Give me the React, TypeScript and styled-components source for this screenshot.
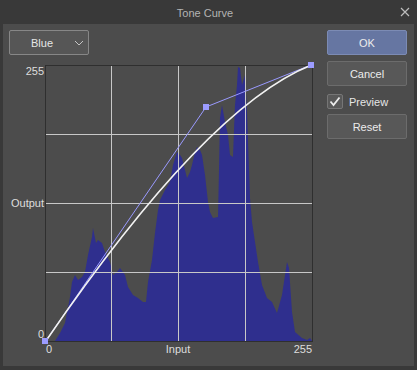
import React from "react";
import styled, { createGlobalStyle } from "styled-components";

const GlobalStyle = createGlobalStyle`
  html, body { margin: 0; padding: 0; background: #393939; }
  body { font-family: "Liberation Sans", Arial, sans-serif; }
  * { box-sizing: border-box; }
`;

const Window = styled.div`
  width: 417px;
  height: 370px;
  background: #393939;
  display: flex;
  flex-direction: column;
  font-family: "Liberation Sans", Arial, sans-serif;
  font-size: 11px;
`;

const TitleBar = styled.div`
  height: 24px;
  display: grid;
  grid-template-columns: 1fr auto 1fr;
  align-items: center;
  padding: 0 7px 0 0;
`;

const Title = styled.div`
  grid-column: 2;
  color: #b4b4b4;
  font-size: 11px;
  line-height: 14px;
  padding-top: 1px;
`;

const CloseButton = styled.div`
  grid-column: 3;
  justify-self: end;
  width: 10px;
  height: 10px;
  display: flex;
`;

const Panel = styled.div`
  margin: 0 3px 4px 3px;
  flex: 1;
  background: #4c4c4c;
  display: flex;
  padding: 6px 7px 0 6px;
  gap: 14px;
`;

const LeftCol = styled.div`
  width: 304px;
  display: flex;
  flex-direction: column;
`;

const RightCol = styled.div`
  width: 80px;
  display: flex;
  flex-direction: column;
`;

const Dropdown = styled.div`
  width: 80px;
  height: 25px;
  border: 1px solid #878787;
  border-radius: 2px;
  background: #565656;
  color: #e6e6e6;
  display: flex;
  align-items: center;
  padding: 0 4px 0 21px;
  justify-content: space-between;
  font-size: 11px;
`;

const ChartArea = styled.div`
  margin-top: 10px;
  display: grid;
  grid-template-columns: 36px 268px;
  grid-template-rows: 277px auto;
`;

const YLabels = styled.div`
  display: flex;
  flex-direction: column;
  justify-content: space-between;
  align-items: flex-end;
  padding: 1px 1px 2px 0;
  color: #dedede;
  line-height: 11px;
`;

const Plot = styled.svg`
  display: block;
  overflow: visible;
`;

const XLabels = styled.div`
  grid-column: 2;
  display: grid;
  grid-template-columns: 1fr auto 1fr;
  padding: 2px 1px 0 1px;
  color: #dedede;
  line-height: 11px;
`;

const XLabel = styled.span<{ $align: "start" | "center" | "end" }>`
  justify-self: ${(p) => p.$align};
  margin-right: ${(p) => (p.$align === "center" ? "2px" : "0")};
`;

const Button = styled.div<{ $primary?: boolean; $gap?: number }>`
  height: 25px;
  margin-top: ${(p) => p.$gap ?? 0}px;
  border: 1px solid ${(p) => (p.$primary ? "#7c8bb4" : "#6c6c6c")};
  border-radius: 2px;
  background: ${(p) => (p.$primary ? "#6676a2" : "#585858")};
  color: #ececec;
  display: flex;
  align-items: center;
  justify-content: center;
  font-size: 11px;
`;

const CheckRow = styled.label`
  margin-top: 8px;
  height: 15px;
  display: flex;
  align-items: center;
  gap: 6px;
  color: #e6e6e6;
  font-size: 11px;
`;

const CheckBox = styled.span`
  width: 16px;
  height: 15px;
  border: 1px solid #767676;
  border-radius: 2px;
  background: #595959;
  display: flex;
  align-items: center;
  justify-content: center;
`;

const hist: [number, number][] = [
  [55, 341], [60, 333], [65, 323], [70, 297], [72, 282], [75, 275], [78, 280],
  [82, 277], [85, 272], [88, 255], [92, 237], [93, 228], [96, 243], [98, 240],
  [102, 243], [105, 252], [110, 262], [113, 275], [117, 272], [120, 268],
  [125, 275], [128, 287], [133, 295], [138, 298], [143, 302], [146, 302],
  [148, 282], [152, 260], [155, 233], [158, 210], [160, 200], [165, 190],
  [170, 182], [173, 165], [177, 152], [180, 155], [182, 158], [185, 170],
  [187, 178], [190, 172], [192, 165], [195, 152], [197, 147], [200, 150],
  [202, 155], [205, 175], [208, 202], [210, 212], [213, 218], [218, 217],
  [219, 170], [220, 118], [222, 105], [225, 122], [228, 135], [230, 155],
  [233, 157], [234, 130], [235, 105], [237, 85], [238, 67], [240, 68],
  [242, 85], [245, 75], [247, 112], [250, 198], [252, 222], [255, 242],
  [258, 262], [262, 285], [267, 298], [272, 302], [277, 313], [282, 295],
  [287, 262], [289, 268], [292, 312], [295, 332], [302, 338], [307, 340],
  [310, 338], [312, 341],
];

const histPoints = hist.map(([x, y]) => `${x},${y}`).join(" ");

const gridX = [111.5, 178.5, 245.5];
const gridY = [134.5, 203.5, 272.5];

const ToneCurvePlot = () => (
  <Plot width={268} height={277} viewBox="45 65 268 277">
    <polygon points={histPoints} fill="#2f2f8e" />
    {gridX.map((x) => (
      <line key={x} x1={x} y1={65} x2={x} y2={341} stroke="#c8c8c8" strokeWidth={1} />
    ))}
    {gridY.map((y) => (
      <line key={y} x1={45} y1={y} x2={312} y2={y} stroke="#c8c8c8" strokeWidth={1} />
    ))}
    <rect x={45.5} y={65.5} width={267} height={276} fill="none" stroke="#2f2f2f" strokeWidth={1} />
    <polyline
      points="45.5,341.5 206,107 311,65"
      fill="none"
      stroke="#9a9aff"
      strokeWidth={1}
    />
    <path
      d="M45.5 341.5 Q206 107 311.5 65"
      fill="none"
      stroke="#f2f2f2"
      strokeWidth={1.6}
    />
    <rect x={42} y={338} width={6} height={6} fill="#9c9cff" />
    <rect x={203} y={104} width={6} height={6} fill="#9c9cff" />
    <rect x={308} y={62} width={6} height={6} fill="#9c9cff" />
  </Plot>
);

export default function App() {
  return (
    <>
      <GlobalStyle />
      <Window>
        <TitleBar>
          <Title>Tone Curve</Title>
          <CloseButton>
            <svg width="10" height="10" viewBox="0 0 10 10">
              <path d="M1 1 L9 9 M9 1 L1 9" stroke="#bdbdbd" strokeWidth="1.2" />
            </svg>
          </CloseButton>
        </TitleBar>
        <Panel>
          <LeftCol>
            <Dropdown>
              <span>Blue</span>
              <svg width="10" height="6" viewBox="0 0 10 6">
                <path d="M1 1 L5 5 L9 1" fill="none" stroke="#c4c4c4" strokeWidth="1" />
              </svg>
            </Dropdown>
            <ChartArea>
              <YLabels>
                <span>255</span>
                <span>Output</span>
                <span>0</span>
              </YLabels>
              <ToneCurvePlot />
              <XLabels>
                <XLabel $align="start">0</XLabel>
                <XLabel $align="center">Input</XLabel>
                <XLabel $align="end">255</XLabel>
              </XLabels>
            </ChartArea>
          </LeftCol>
          <RightCol>
            <Button $primary>OK</Button>
            <Button $gap={6}>Cancel</Button>
            <CheckRow>
              <CheckBox>
                <svg width="12" height="11" viewBox="0 0 12 11">
                  <path d="M1.5 5.5 L4.5 9 L10.5 1.5" fill="none" stroke="#ececec" strokeWidth="1.8" />
                </svg>
              </CheckBox>
              <span>Preview</span>
            </CheckRow>
            <Button $gap={5}>Reset</Button>
          </RightCol>
        </Panel>
      </Window>
    </>
  );
}
